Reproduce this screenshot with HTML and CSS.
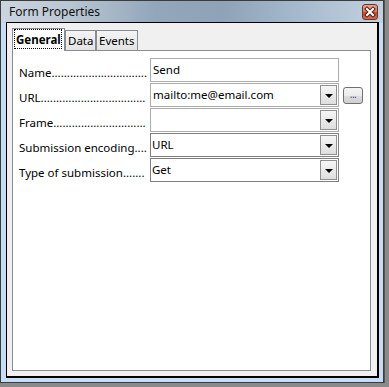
FILE: index.html
```html
<!DOCTYPE html>
<html lang="en">
<head>
    <meta charset="UTF-8">
    <title>Form Properties</title>
    <link rel="stylesheet" href="styles.css">
</head>
<body>
    <div class="window">
        <div class="titlebar">
            <span class="title">Form Properties</span>
            <span class="close">
                <svg width="14" height="14" viewBox="0 0 14 14">
                    <path d="M4 4 L10 10 M10 4 L4 10" stroke="#4a2418" stroke-width="4" stroke-linecap="square"/>
                    <path d="M4 4 L10 10 M10 4 L4 10" stroke="#ffffff" stroke-width="2" stroke-linecap="square"/>
                </svg>
            </span>
        </div>
        <div class="client">
            <div class="tabs">
                <div class="tab active"><span class="focus">General</span></div>
                <div class="tab data">Data</div>
                <div class="tab events">Events</div>
            </div>
            <div class="panel">
                <div class="row">
                    <span class="label">Name...............................</span>
                    <div class="field"><span class="value">Send</span></div>
                </div>
                <div class="row">
                    <span class="label">URL..................................</span>
                    <div class="field combo">
                        <span class="value">mailto:me@email.com</span>
                        <span class="drop"><i></i></span>
                    </div>
                    <span class="browse">...</span>
                </div>
                <div class="row">
                    <span class="label">Frame..............................</span>
                    <div class="field combo">
                        <span class="value"></span>
                        <span class="drop"><i></i></span>
                    </div>
                </div>
                <div class="row">
                    <span class="label">Submission encoding....</span>
                    <div class="field combo dark">
                        <span class="value">URL</span>
                        <span class="drop"><i></i></span>
                    </div>
                </div>
                <div class="row">
                    <span class="label">Type of submission.......</span>
                    <div class="field combo dark">
                        <span class="value">Get</span>
                        <span class="drop"><i></i></span>
                    </div>
                </div>
            </div>
        </div>
    </div>
</body>
</html>
```

FILE: styles.css
```css
body {
    margin: 0;
    background: #8a8a8a;
    font-family: 'Noto Sans', 'Liberation Sans', sans-serif;
    font-size: 11.5px;
    color: #000;
}
.window {
    width: 384px;
    height: 383px;
    box-sizing: border-box;
    border: 1px solid #3c3c3c;
    padding: 0 4px 4px 5px;
    background:
        linear-gradient(to right, #cbd5df 0%, #b9c6d3 18%, #93a7bb 40%, #8ea3b8 58%, #a9bccf 80%, #c2d1df 100%) top / 100% 22px no-repeat,
        #c6ddf5;
    box-shadow: 1px 0 0 #555;
    display: flex;
    flex-direction: column;
}
.titlebar {
    height: 21px;
    margin-left: -5px;
    margin-right: -4px;
    padding-left: 8px;
    padding-right: 5px;
    display: flex;
    align-items: flex-start;
}
.title {
    flex: 1;
    font-size: 12px;
    line-height: 22px;
    color: #111;
}
.close {
    margin-top: 3px;
    width: 16px;
    height: 16px;
    box-sizing: border-box;
    border: 1px solid #6b3528;
    border-radius: 3px;
    background: linear-gradient(#eba28c 0%, #dc7a60 45%, #c8482e 55%, #d46c52 100%);
    display: flex;
    align-items: center;
    justify-content: center;
}
.client {
    flex: 1;
    border: 1px solid #000;
    border-right-width: 2px;
    border-bottom-width: 2px;
    background: #f0f0f0;
    padding: 5px 6px 5px 5px;
    display: flex;
    flex-direction: column;
}
.tabs {
    height: 22px;
    display: flex;
    align-items: flex-end;
}
.tab {
    height: 20px;
    box-sizing: border-box;
    border: 1px solid #898c95;
    border-bottom: none;
    background: linear-gradient(#f4f4f4, #e4e4e4);
    line-height: 20px;
    padding-left: 2px;
}
.tab.data {
    width: 31px;
}
.tab.events {
    width: 42px;
}
.tab.active {
    position: relative;
    z-index: 1;
    width: 53px;
    height: 23px;
    margin-bottom: -1px;
    background: #fff;
    padding: 0 0 0 1px;
    font-weight: bold;
}
.focus {
    display: block;
    width: 48px;
    height: 20px;
    box-sizing: border-box;
    border: 1px dotted #000;
    line-height: 19px;
    padding-left: 1px;
}
.panel {
    flex: 1;
    border: 1px solid #898c95;
    background: #fff;
    padding: 7px 6px;
}
.row {
    height: 24px;
    margin-bottom: 1px;
    display: flex;
    align-items: flex-start;
}
.label {
    flex-shrink: 0;
    width: 128px;
    margin-right: 3px;
    white-space: nowrap;
    line-height: 24px;
    padding-top: 3px;
    height: 21px;
}
.field {
    width: 189px;
    height: 24px;
    box-sizing: border-box;
    border: 1px solid #acacac;
    background: #fff;
    display: flex;
    align-items: stretch;
}
.field.dark {
    border-color: #7f7f7f;
}
.value {
    flex: 1;
    line-height: 22px;
    padding-left: 2px;
    white-space: nowrap;
}
.field.dark .value {
    padding-left: 1px;
}
.drop {
    width: 17px;
    box-sizing: border-box;
    margin: 1px 1px 1px 0;
    border: 1px solid #8e8f8f;
    background: linear-gradient(#f6f6f6, #dedede);
    display: flex;
    align-items: center;
    justify-content: center;
}
.drop i {
    width: 0;
    height: 0;
    border-left: 4px solid transparent;
    border-right: 4px solid transparent;
    border-top: 4px solid #000;
    margin-top: 1px;
}
.browse {
    align-self: center;
    margin-left: 4px;
    width: 20px;
    height: 17px;
    box-sizing: border-box;
    border: 1px solid #707070;
    border-radius: 3px;
    background: linear-gradient(#f4f4f4 0%, #ebebeb 50%, #dddddd 51%, #cfcfcf 100%);
    font-size: 10px;
    line-height: 12px;
    text-align: center;
    color: #3a4f8c;
    letter-spacing: -0.5px;
}
```
